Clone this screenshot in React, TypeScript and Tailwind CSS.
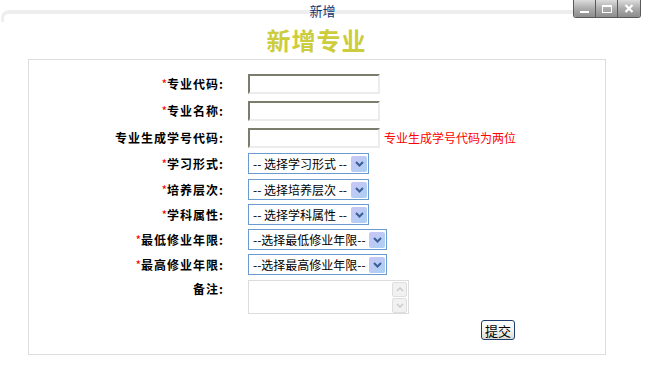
import React from 'react';

const font = { fontFamily: '"Noto Sans CJK SC", "Liberation Sans", sans-serif' };

function Label({ text, required }: { text: string; required?: boolean }) {
  return (
    <div className="w-[195px] shrink-0 text-right text-[12px] font-bold text-black leading-[14px] tracking-[1px]">
      {required && <span className="text-[#ff0000] font-normal tracking-normal">*</span>}
      {text}:
    </div>
  );
}

function TextBox() {
  return (
    <div className="w-[132px] h-[20px] bg-white border-2 border-t-[#7c7c6c] border-l-[#7c7c6c] border-b-[#ececec] border-r-[#ececec]" />
  );
}

function Select({ text, width }: { text: string; width: string }) {
  return (
    <div className={`${width} h-[21px] border-[1.5px] border-[#6a9bd0] bg-white flex items-center p-[1px]`}>
      <span className="flex-1 pl-[3px] text-[12px] text-black leading-none whitespace-nowrap">{text}</span>
      <div className="w-[16px] h-[16px] rounded-[2px] bg-gradient-to-br from-[#c9c6f6] to-[#a9d0f3] flex items-center justify-center">
        <svg width="9" height="6" viewBox="0 0 9 6">
          <path d="M1 1 L4.5 4.5 L8 1" stroke="#3a5f94" strokeWidth="2" fill="none" />
        </svg>
      </div>
    </div>
  );
}

function WinButtons() {
  const btn = 'w-[22px] h-[17px] flex items-center justify-center bg-gradient-to-b from-[#dcdcdc] via-[#acacac] to-[#8c8c8c] border-r border-[#5a5a5a]';
  return (
    <div className="absolute right-[4px] top-0 flex border border-t-0 border-l border-[#5a5a5a] rounded-b-[3px] overflow-hidden">
      <div className={btn}>
        <div className="w-[9px] h-[2px] bg-white mt-[6px]" />
      </div>
      <div className={btn}>
        <div className="w-[10px] h-[8px] border border-white border-t-[2px]" />
      </div>
      <div className={btn + ' border-r-0'}>
        <svg width="10" height="9" viewBox="0 0 10 9">
          <path d="M1.5 1 L8.5 8 M8.5 1 L1.5 8" stroke="white" strokeWidth="2.2" />
        </svg>
      </div>
    </div>
  );
}

export default function App() {
  return (
    <div className="w-[645px] h-[385px] bg-white relative overflow-hidden" style={font}>
      {/* window frame */}
      <div className="absolute left-[1px] top-[10px] w-[640px] h-[12px] border-t-[4px] border-l-[3px] border-[#eeeeee] rounded-tl-[8px]" />
      <WinButtons />

      <div className="relative h-[22px] flex justify-center pt-[2px] text-[13px] text-[#0b3574] leading-[18px]">
        新增
      </div>

      <div className="flex justify-center pt-[3px] h-[37px]">
        <h1 className="text-[24px] leading-[30px] font-bold text-[#cccc3c] tracking-[1px] -ml-[12px]">新增专业</h1>
      </div>

      <div className="ml-[28px] w-[578px] h-[296px] border border-[#dddddd] pt-[14px]">
        <div className="flex items-center h-[20px]">
          <Label text="专业代码" required />
          <div className="ml-[24px]"><TextBox /></div>
        </div>
        <div className="flex items-center h-[20px] mt-[7px]">
          <Label text="专业名称" required />
          <div className="ml-[24px]"><TextBox /></div>
        </div>
        <div className="flex items-center h-[20px] mt-[7px]">
          <Label text="专业生成学号代码" />
          <div className="ml-[24px] flex items-center">
            <TextBox />
            <span className="ml-[4px] text-[12px] text-[#ff0000] leading-none">专业生成学号代码为两位</span>
          </div>
        </div>
        <div className="flex items-center h-[21px] mt-[5px]">
          <Label text="学习形式" required />
          <div className="ml-[24px]"><Select text="-- 选择学习形式 --" width="w-[121px]" /></div>
        </div>
        <div className="flex items-center h-[21px] mt-[5px]">
          <Label text="培养层次" required />
          <div className="ml-[24px]"><Select text="-- 选择培养层次 --" width="w-[121px]" /></div>
        </div>
        <div className="flex items-center h-[21px] mt-[4px]">
          <Label text="学科属性" required />
          <div className="ml-[24px]"><Select text="-- 选择学科属性 --" width="w-[121px]" /></div>
        </div>
        <div className="flex items-center h-[21px] mt-[4px]">
          <Label text="最低修业年限" required />
          <div className="ml-[24px]"><Select text="--选择最低修业年限--" width="w-[139px]" /></div>
        </div>
        <div className="flex items-center h-[21px] mt-[4px]">
          <Label text="最高修业年限" required />
          <div className="ml-[24px]"><Select text="--选择最高修业年限--" width="w-[139px]" /></div>
        </div>
        <div className="flex items-start mt-[5px]">
          <div className="pt-[2px]"><Label text="备注" /></div>
          <div className="ml-[24px] w-[161px] h-[34px] border border-[#dcdcdc] bg-white flex justify-end">
            <div className="w-[16px] flex flex-col gap-[1px] pt-[1px] pr-[1px]">
              <div className="h-[15px] bg-[#f1f1f1] border border-[#dedede] rounded-[2px] flex items-center justify-center">
                <svg width="8" height="5" viewBox="0 0 8 5"><path d="M1 4 L4 1 L7 4" stroke="#cccccc" strokeWidth="1.5" fill="none" /></svg>
              </div>
              <div className="h-[15px] bg-[#f1f1f1] border border-[#dedede] rounded-[2px] flex items-center justify-center">
                <svg width="8" height="5" viewBox="0 0 8 5"><path d="M1 1 L4 4 L7 1" stroke="#cccccc" strokeWidth="1.5" fill="none" /></svg>
              </div>
            </div>
          </div>
        </div>
        <div className="flex mt-[6px]">
          <button className="ml-[452px] w-[34px] h-[20px] border border-[#1e3f6e] rounded-[3px] bg-gradient-to-b from-white via-[#f4f4f0] to-[#dcdcd4] text-[13px] text-black leading-none flex items-center justify-center">
            提交
          </button>
        </div>
      </div>
    </div>
  );
}
